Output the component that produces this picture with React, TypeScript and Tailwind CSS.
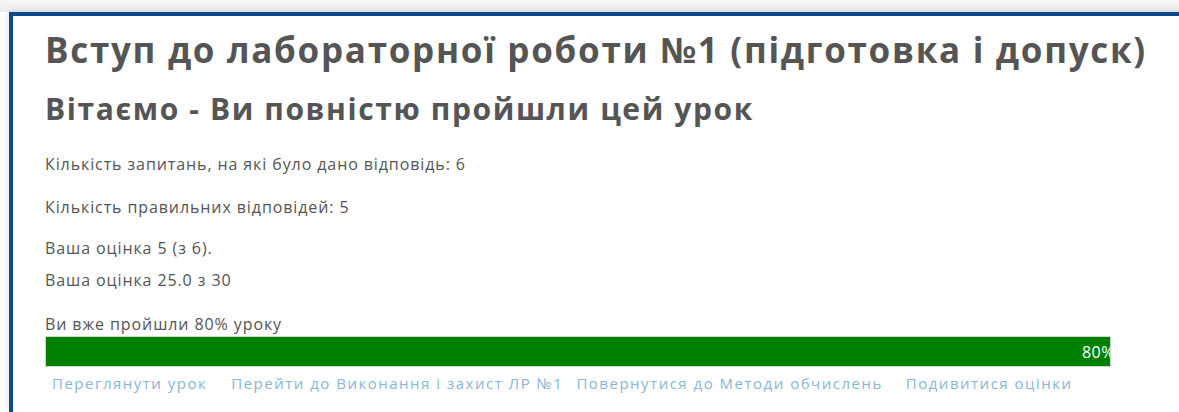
import React from 'react';

const links = [
  { label: 'Переглянути урок', gap: 'ml-0' },
  { label: 'Перейти до Виконання і захист ЛР №1', gap: 'ml-[24px]' },
  { label: 'Повернутися до Методи обчислень', gap: 'ml-[13px]' },
  { label: 'Подивитися оцінки', gap: 'ml-[23px]' },
];

const LessonEnd: React.FC = () => {
  const progress = 80;

  return (
    <div className="flex h-[412px] w-[1179px] flex-col overflow-hidden bg-white font-['Open_Sans',sans-serif] text-[#555]">
      <div className="h-[12px] shrink-0 bg-gradient-to-b from-[#f7f7f7] to-[#ececec]" />
      <div className="ml-[9px] w-[1300px] flex-1 border-l-4 border-t-4 border-[#0b4a8b] bg-white pl-[32px] pt-[12px] shadow-[0_0_6px_rgba(0,0,0,0.15)]">
        <h1 className="text-[35px] font-bold leading-[44px] tracking-[1.7px]">
          Вступ до лабораторної роботи №1 (підготовка і допуск)
        </h1>
        <h2 className="mt-[18px] text-[30px] font-bold leading-[38px] tracking-[1.6px]">
          Вітаємо - Ви повністю пройшли цей урок
        </h2>
        <div className="text-[16px] leading-[20px] tracking-[0.9px]">
          <p className="mt-[26px]">Кількість запитань, на які було дано відповідь: 6</p>
          <p className="mt-[23px]">Кількість правильних відповідей: 5</p>
          <p className="mt-[21px]">Ваша оцінка 5 (з 6).</p>
          <p className="mt-[12px]">Ваша оцінка 25.0 з 30</p>
          <p className="mt-[24px]">Ви вже пройшли {progress}% уроку</p>
        </div>
        <div className="mt-[2px] w-[1066px] border border-[#cfd8cf]">
          <div
            className="flex h-[29px] items-center justify-end overflow-hidden bg-[#008000] text-[16px] tracking-[0.5px] text-white"
            style={{ width: '100%' }}
          >
            <span className="-mr-[5px]">{progress}%</span>
          </div>
        </div>
        <div className="mt-[6px] flex pl-[7px] text-[15px] leading-[20px] tracking-[1.5px] text-[#87b6d6]">
          {links.map((l) => (
            <a key={l.label} href="#" className={`whitespace-nowrap ${l.gap}`}>
              {l.label}
            </a>
          ))}
        </div>
      </div>
    </div>
  );
};

export default function App() {
  return <LessonEnd />;
}
